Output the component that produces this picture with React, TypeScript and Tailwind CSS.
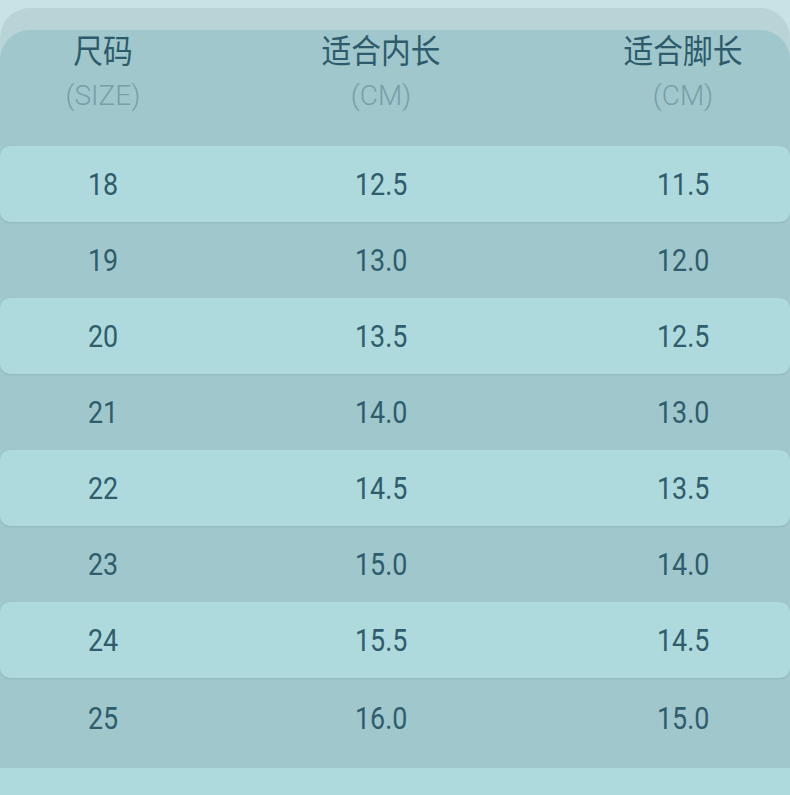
import React from 'react';

const rows = [
  ['18', '12.5', '11.5'],
  ['19', '13.0', '12.0'],
  ['20', '13.5', '12.5'],
  ['21', '14.0', '13.0'],
  ['22', '14.5', '13.5'],
  ['23', '15.0', '14.0'],
  ['24', '15.5', '14.5'],
  ['25', '16.0', '15.0'],
];

const font = { fontFamily: 'Roboto, "Noto Sans CJK SC", sans-serif' };

function Cell({ children, className = '' }: { children: React.ReactNode; className?: string }) {
  return (
    <div className={`flex items-center justify-center ${className}`}>
      <span className="inline-block scale-x-[0.84] text-[32px] leading-none text-[#2f5d6c]">{children}</span>
    </div>
  );
}

export default function App() {
  return (
    <div className="w-[790px] h-[795px] overflow-hidden bg-[#c8e2e6] pt-2" style={font}>
      <div className="rounded-t-[30px] bg-[#b9d4d7] pt-[22px]">
        <div className="bg-[#a0c8cc] rounded-t-[30px]">
          {/* Header */}
          <div className="grid grid-cols-[206px_350px_234px] h-[116px]">
            {[
              ['尺码', '(SIZE)'],
              ['适合内长', '(CM)'],
              ['适合脚长', '(CM)'],
            ].map(([title, sub], i) => (
              <div key={i} className={`flex flex-col items-center ${i === 2 ? 'pl-5' : ''}`}>
                <span className="inline-block scale-x-[0.9] text-[33px] leading-[44px] text-[#2d5b6b]">{title}</span>
                <span className="inline-block mt-[2px] text-[28px] font-light leading-[40px] text-[#779fa8]">{sub}</span>
              </div>
            ))}
          </div>

          {/* Rows */}
          {rows.map((r, i) => {
            const light = i % 2 === 0;
            const last = i === rows.length - 1;
            return (
              <div
                key={r[0]}
                className={`grid grid-cols-[206px_350px_234px] ${last ? 'h-[90px] pb-[10px]' : 'h-[76px]'} ${
                  light ? 'bg-[#aed9dd] rounded-[10px] shadow-[0_1px_2px_rgba(80,130,140,0.25)]' : ''
                }`}
              >
                <Cell>{r[0]}</Cell>
                <Cell>{r[1]}</Cell>
                <Cell className="pl-5">{r[2]}</Cell>
              </div>
            );
          })}
        </div>
      </div>
      <div className="h-[40px] bg-[#aed9dd]" />
    </div>
  );
}
